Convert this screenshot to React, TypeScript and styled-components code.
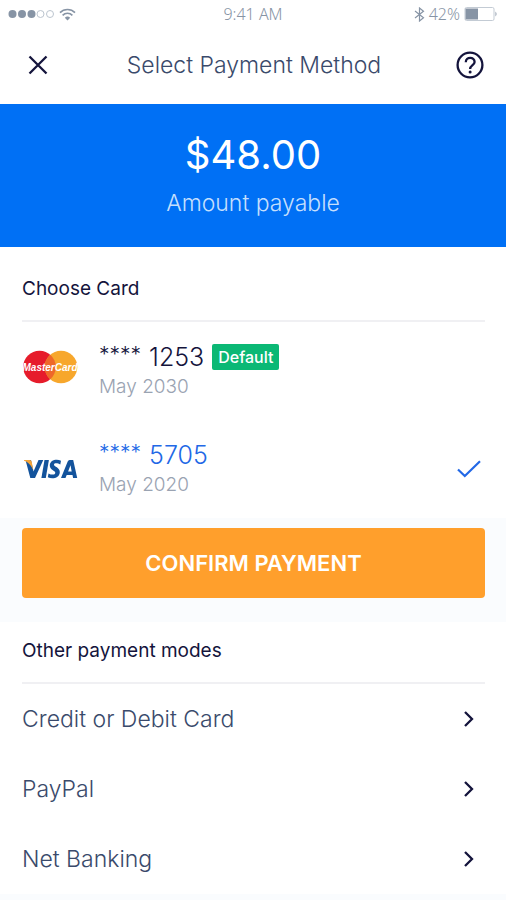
import React, { useState } from "react";
import styled, { createGlobalStyle } from "styled-components";

const color = {
  ink: "#14143c",
  text: "#3a4a6b",
  muted: "#9aa3b2",
  status: "#8794a5",
  blue: "#0070f5",
  selected: "#2268e6",
  green: "#0bb875",
  orange: "#ff9f2c",
  band: "#fafcfe",
  line: "#f0f0f3",
};

const GlobalStyle = createGlobalStyle`
  *, *::before, *::after { box-sizing: border-box; }
  body { margin: 0; background: ${color.band}; }
  body, button, input { font-family: Inter, "Liberation Sans", sans-serif; }
  h1, h2, p, ul { margin: 0; padding: 0; }
`;

const Screen = styled.main`
  width: 100%;
  background: #fff;
  color: ${color.ink};
`;

const StatusBar = styled.div`
  display: grid;
  grid-template-columns: 1fr auto 1fr;
  align-items: center;
  height: 28px;
  padding: 0 8px;
  color: ${color.status};
  font: 300 16px/20px "Noto Sans", sans-serif;
`;

const StatusGroup = styled.div<{ $end?: boolean }>`
  display: flex;
  align-items: center;
  justify-content: ${(p) => (p.$end ? "flex-end" : "flex-start")};
  gap: 4px;
`;

const Header = styled.header`
  display: flex;
  align-items: center;
  justify-content: space-between;
  height: 76px;
  padding: 0 20px 2px 22px;
`;

const Title = styled.h1`
  font-size: 23px;
  line-height: 32px;
  font-weight: 300;
  color: ${color.text};
`;

const IconButton = styled.button`
  display: grid;
  place-items: center;
  width: 32px;
  height: 32px;
  padding: 0;
  border: 0;
  background: none;
  color: ${color.ink};
  cursor: pointer;
`;

const Summary = styled.section`
  display: flex;
  flex-direction: column;
  align-items: center;
  gap: 8px;
  padding: 26px 24px 28px;
  background: ${color.blue};
  color: #fff;
`;

const Amount = styled.p`
  font-size: 40px;
  line-height: 49px;
  font-weight: 400;
`;

const AmountLabel = styled.p`
  font-size: 23px;
  line-height: 32px;
  font-weight: 300;
  color: #c4dffd;
`;

const Section = styled.section`
  padding: 0 21px 0 22px;
`;

const SectionTitle = styled.h2<{ $tall?: boolean }>`
  padding: ${(p) => (p.$tall ? "29px 0 19px" : "16px 0 19px")};
  border-bottom: 2px solid ${color.line};
  font-size: 19px;
  line-height: 25px;
  font-weight: 400;
`;

const CardOption = styled.label`
  position: relative;
  display: flex;
  align-items: center;
  height: 98px;
  padding-right: 4px;
  cursor: pointer;
`;

const HiddenRadio = styled.input`
  position: absolute;
  opacity: 0;
`;

const Brand = styled.span<{ $raised: boolean }>`
  display: flex;
  width: 77px;
  padding-bottom: ${(p) => (p.$raised ? "8px" : "0")};
`;

const CardInfo = styled.span`
  display: flex;
  flex: 1;
  flex-direction: column;
`;

const CardLine = styled.span`
  display: flex;
  align-items: center;
  gap: 8px;
`;

const CardNumber = styled.span<{ $selected: boolean }>`
  display: flex;
  gap: 8px;
  font-size: 25px;
  line-height: 32px;
  font-weight: 300;
  color: ${(p) => (p.$selected ? color.selected : color.ink)};
`;

const Mask = styled.span`
  font-size: 21px;
  line-height: 28px;
`;

const Badge = styled.span`
  padding: 0 6px;
  border-radius: 2px;
  background: ${color.green};
  color: #fff;
  font-size: 16px;
  line-height: 26px;
  font-weight: 500;
`;

const Expiry = styled.span`
  font-size: 19px;
  line-height: 28px;
  font-weight: 300;
  color: ${color.muted};
`;

const ConfirmBand = styled.div`
  padding: 10px 21px 24px 22px;
  background: ${color.band};
`;

const ConfirmButton = styled.button`
  width: 100%;
  height: 70px;
  border: 0;
  border-radius: 4px;
  background: ${color.orange};
  color: #fff;
  font-size: 22px;
  font-weight: 600;
  cursor: pointer;
`;

const ModeList = styled.ul`
  list-style: none;
`;

const ModeButton = styled.button`
  display: flex;
  align-items: center;
  justify-content: space-between;
  width: 100%;
  height: 70px;
  padding: 0 10px 0 0;
  border: 0;
  background: none;
  color: ${color.text};
  font-size: 23px;
  font-weight: 300;
  text-align: left;
  cursor: pointer;
`;

const Signal = () => (
  <svg width="47" height="10" viewBox="0 0 47 10" aria-hidden="true">
    {[4.5, 14, 23.5].map((x) => (
      <circle key={x} cx={x} cy="5" r="4" fill={color.status} />
    ))}
    {[32.5, 42].map((x) => (
      <circle key={x} cx={x} cy="5" r="3.5" fill="none" stroke="#bcc5cf" />
    ))}
  </svg>
);

const Wifi = () => (
  <svg width="17" height="13" viewBox="0 0 17 13" fill="none" stroke={color.status} strokeWidth="1.6" aria-hidden="true">
    <path d="M1 4.6C5 .4 12 .4 16 4.6M3.6 7.4C6.3 4.6 10.7 4.6 13.4 7.4" />
    <path d="M8.5 12.5L5.8 9.7Q8.5 7.4 11.2 9.7Z" fill={color.status} stroke="none" />
  </svg>
);

const Bluetooth = () => (
  <svg width="11" height="15" viewBox="0 0 11 15" fill="none" stroke={color.status} strokeWidth="1.2" aria-hidden="true">
    <path d="M1 4L9.5 10.8L5.5 14V1L9.5 4.2L1 11" />
  </svg>
);

const Battery = () => (
  <svg width="34" height="14" viewBox="0 0 34 14" aria-hidden="true">
    <rect x="1" y=".5" width="29" height="13" rx="1.5" fill="none" stroke="#c3cbd4" />
    <rect x="1.5" y="1.5" width="12.5" height="11" fill={color.status} />
    <path d="M31.5 4.5Q33.5 7 31.5 9.5Z" fill={color.status} />
  </svg>
);

const Close = () => (
  <svg width="20" height="20" viewBox="0 0 20 20" fill="none" stroke="currentColor" strokeWidth="2.3" aria-hidden="true">
    <path d="M1.5 1.5L18.5 18.5M18.5 1.5L1.5 18.5" />
  </svg>
);

const Help = () => (
  <svg width="28" height="28" viewBox="0 0 28 28" fill="none" stroke="currentColor" strokeWidth="2.3" aria-hidden="true">
    <circle cx="14" cy="14" r="12.4" />
    <path d="M9.8 11.2C9.8 5.5 18.6 5.5 18.6 11C18.6 14 14.1 14.3 14.1 18" />
    <circle cx="14.1" cy="21.1" r="1.5" fill="currentColor" stroke="none" />
  </svg>
);

const MasterCard = () => (
  <svg width="56" height="34" viewBox="0 0 56 34" role="img" aria-label="MasterCard">
    <circle cx="17.5" cy="17" r="16.3" fill="#e61c2b" />
    <circle cx="39" cy="17" r="16.3" fill="#f7a72c" />
    <path d="M28.25 4.75A16.3 16.3 0 0 1 28.25 29.25A16.3 16.3 0 0 1 28.25 4.75Z" fill="#ee6829" />
    <text x="28" y="21" textAnchor="middle" fontFamily="Liberation Sans, sans-serif" fontSize="10" fontWeight="700" fontStyle="italic" fill="#fff">
      MasterCard
    </text>
  </svg>
);

const Visa = () => (
  <svg width="56" height="22" viewBox="0 0 56 22" role="img" aria-label="Visa">
    <g fill="#13539c">
      <path d="M3.5 2H9L11.5 13.5L16.5 2H21.3L13 20H8.3Z" />
      <path d="M22.5 2H26.9L23.8 20H19.4Z" />
      <path d="M39 2.7L38.3 6.4C36 5.2 32 4.7 32 6.7C32 8.8 37.8 9.2 37.8 13.9C37.8 20 30.5 21.5 25.8 19.3L26.5 15.4C29.2 17 33.3 17.2 33.3 14.8C33.3 12.7 27.8 12.3 27.8 7.6C27.8 1.8 34.8.8 39 2.7Z" />
      <path fillRule="evenodd" d="M47.5 2H51.2L55.2 20H51.1L50.5 17H44.7L43.5 20H39L45.7 3.5Q46.3 2 47.5 2ZM48.5 7.2L46.1 13.6H49.7Z" />
    </g>
    <path d="M2 2H7.8Q9.3 2 9.7 3.7L11.3 12.2C9.5 7.5 6 4 2 2.7Z" fill="#f2a33a" />
  </svg>
);

const Check = () => (
  <svg width="24" height="18" viewBox="0 0 24 18" fill="none" stroke={color.selected} strokeWidth="2.2" aria-hidden="true">
    <path d="M1 9.5L7.8 16L23 1.2" />
  </svg>
);

const Chevron = () => (
  <svg width="12" height="16" viewBox="0 0 12 16" fill="none" stroke={color.ink} strokeWidth="2.3" aria-hidden="true">
    <path d="M2 1L9 8L2 15" />
  </svg>
);

const cards = [
  { id: "mastercard", logo: <MasterCard />, digits: "1253", expiry: "May 2030", isDefault: true },
  { id: "visa", logo: <Visa />, digits: "5705", expiry: "May 2020", isDefault: false },
];

const modes = ["Credit or Debit Card", "PayPal", "Net Banking"];

export default function App() {
  const [selected, setSelected] = useState("visa");

  return (
    <>
      <GlobalStyle />
      <Screen>
        <StatusBar>
          <StatusGroup>
            <Signal />
            <Wifi />
          </StatusGroup>
          <span>9:41 AM</span>
          <StatusGroup $end>
            <Bluetooth />
            <span>42%</span>
            <Battery />
          </StatusGroup>
        </StatusBar>
        <Header>
          <IconButton type="button" aria-label="Close">
            <Close />
          </IconButton>
          <Title>Select Payment Method</Title>
          <IconButton type="button" aria-label="Help">
            <Help />
          </IconButton>
        </Header>
        <Summary>
          <Amount>$48.00</Amount>
          <AmountLabel>Amount payable</AmountLabel>
        </Summary>
        <Section>
          <SectionTitle $tall>Choose Card</SectionTitle>
          {cards.map((card) => (
            <CardOption key={card.id}>
              <HiddenRadio
                type="radio"
                name="card"
                value={card.id}
                checked={selected === card.id}
                onChange={() => setSelected(card.id)}
              />
              <Brand $raised={card.isDefault}>{card.logo}</Brand>
              <CardInfo>
                <CardLine>
                  <CardNumber $selected={selected === card.id}>
                    <Mask>****</Mask> {card.digits}
                  </CardNumber>
                  {card.isDefault && <Badge>Default</Badge>}
                </CardLine>
                <Expiry>{card.expiry}</Expiry>
              </CardInfo>
              {selected === card.id && <Check />}
            </CardOption>
          ))}
        </Section>
        <ConfirmBand>
          <ConfirmButton type="button">CONFIRM PAYMENT</ConfirmButton>
        </ConfirmBand>
        <Section>
          <SectionTitle>Other payment modes</SectionTitle>
          <ModeList>
            {modes.map((mode) => (
              <li key={mode}>
                <ModeButton type="button">
                  {mode}
                  <Chevron />
                </ModeButton>
              </li>
            ))}
          </ModeList>
        </Section>
      </Screen>
    </>
  );
}
